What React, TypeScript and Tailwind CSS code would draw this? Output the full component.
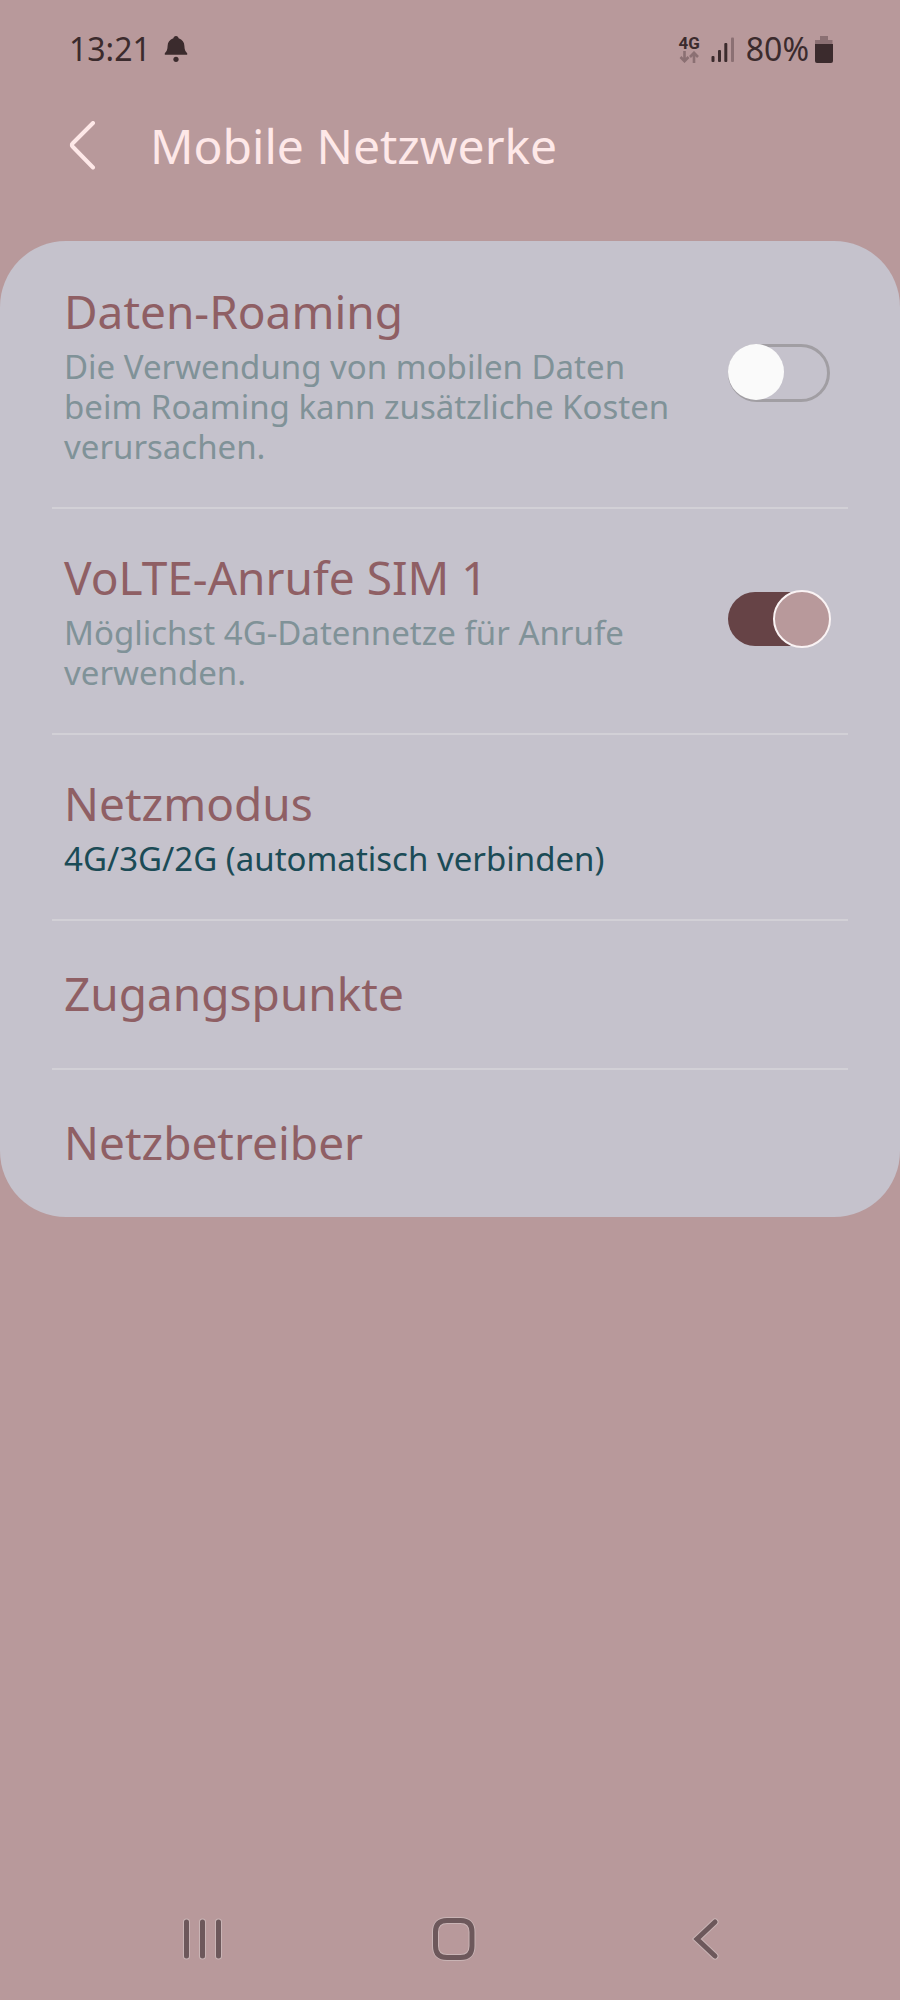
import { useState } from "react";
import type { ReactNode } from "react";

function StatusBar() {
  return (
    <div className="flex h-[98px] items-center justify-between pr-[67px] pl-[69px] text-[#3b2b2d]">
      <div className="flex items-center gap-[13px]">
        <span className="text-[32px] leading-10">13:21</span>
        <svg className="h-[26px] w-[24px]" viewBox="0 0 24 26" fill="currentColor" aria-hidden="true">
          <path d="M12 0c1.500 0 2.500 1 2.600 2.300C18.400 3.400 20.300 6.300 20.400 10c.1 3.300.8 5.300 2.800 7.300v1.500H.8v-1.500c2-2 2.700-4 2.800-7.300.1-3.700 2-6.600 5.800-7.700C9.500 1 10.500 0 12 0Z" />
          <circle cx="12" cy="23.300" r="2.600" />
        </svg>
      </div>
      <div className="flex items-center">
        <div className="flex flex-col items-center">
          <span className="font-['Roboto',sans-serif] text-[17px] leading-4 font-bold">4G</span>
          <svg className="h-3 w-5" viewBox="0 0 20 12" fill="none" stroke="#8b7073" strokeWidth="2.600" aria-hidden="true">
            <path d="M5.500 0v10M1.500 6l4 4.200 4-4.200M15 12V2M11 6l4-4.200L19 6" />
          </svg>
        </div>
        <svg className="ml-[11px] h-[25px] w-[24px]" viewBox="0 0 24 25" fill="currentColor" aria-hidden="true">
          <rect x="0.500" y="19" width="3" height="6" rx="1" />
          <rect x="7" y="13" width="3" height="12" rx="1" />
          <rect x="13.300" y="6" width="3" height="19" rx="1" />
          <rect x="20" y="0.500" width="3" height="24.500" rx="1" fill="#8b7073" />
        </svg>
        <span className="ml-[11px] text-[32px] leading-10">80%</span>
        <svg className="ml-[6px] h-[27px] w-[18px]" viewBox="0 0 18 27" fill="currentColor" aria-hidden="true">
          <path d="M5 0h8v4h4.500v4H0V4h5z" fill="#8b7073" />
          <path d="M0 8h18v17a2 2 0 0 1-2 2H2a2 2 0 0 1-2-2z" />
        </svg>
      </div>
    </div>
  );
}

function Header() {
  return (
    <header className="flex items-center px-[68px] pt-4 pb-[63px] text-[#fee8e8]">
      <button type="button" aria-label="Zurück" className="mr-[54px]">
        <svg className="h-[50px] w-7" viewBox="0 0 28 50" fill="none" stroke="currentColor" strokeWidth="4" strokeLinecap="round" strokeLinejoin="round" aria-hidden="true">
          <path d="M25 2 4.500 22.500a2 2 0 0 0 0 3L25 46.500" />
        </svg>
      </button>
      <h1 className="text-[48px] leading-16">Mobile Netzwerke</h1>
    </header>
  );
}

interface SwitchRowProps {
  id: string;
  title: string;
  description: string;
  defaultOn?: boolean;
}

function SwitchRow({ id, title, description, defaultOn = false }: SwitchRowProps) {
  const [on, setOn] = useState(defaultOn);

  return (
    <Row>
      <div className="flex items-center justify-between gap-8 py-10">
        <label htmlFor={id} className="min-w-0 flex-1">
          <Title>{title}</Title>
          <span className="mt-2 block text-[33px] leading-10 text-[#809298]">{description}</span>
        </label>
        <div className="mr-[5px] mb-1 flex h-[58px] w-[103px] items-center">
          <input
            id={id}
            type="checkbox"
            role="switch"
            checked={on}
            onChange={(e) => setOn(e.target.checked)}
            className="relative h-[58px] w-[102px] appearance-none rounded-full border-3 border-[#a19ea3] before:absolute before:-top-[3px] before:-left-[3px] before:size-14 before:rounded-full before:bg-[#fafafa] checked:h-[54px] checked:border-0 checked:bg-[#664346] checked:before:-top-[2px] checked:before:left-[45px] checked:before:size-[58px] checked:before:border-2 checked:before:border-[#faf3f4] checked:before:bg-[#b8999b]"
          />
        </div>
      </div>
    </Row>
  );
}

function Row({ children }: { children: ReactNode }) {
  return (
    <li className="border-b-2 border-[#d2d0d6] px-[12px] last:border-b-0">{children}</li>
  );
}

function Title({ children }: { children: ReactNode }) {
  return <span className="block text-[46px] leading-14 text-[#8f5f64]">{children}</span>;
}

interface LinkRowProps {
  title: string;
  value?: string;
}

function LinkRow({ title, value }: LinkRowProps) {
  return (
    <Row>
      <button
        type="button"
        className={value ? "block w-full py-10 text-left" : "block w-full pt-11 pb-[47px] text-left"}
      >
        <Title>{title}</Title>
        {value && <span className="mt-2 block text-[33px] leading-10 text-[#1b4b56]">{value}</span>}
      </button>
    </Row>
  );
}

const navIcons = [
  { label: "Letzte Apps", path: "M5.500 5v34M21.500 5v34M37.500 5v34" },
  {
    label: "Startseite",
    path: "M15 3.500h13.500c7.500 0 11.500 4 11.500 11.500v14c0 7.500-4 11.500-11.500 11.500H15C7.500 40.500 3.500 36.500 3.500 29V15C3.500 7.500 7.500 3.500 15 3.500Z",
  },
  { label: "Zurück", path: "M32 5 14 22l18 17" },
];

function NavBar() {
  return (
    <nav className="mt-auto grid h-[122px] grid-cols-3 pr-[69px] pl-[77px]">
      {navIcons.map(({ label, path }) => (
        <button key={label} type="button" aria-label={label} className="flex items-center justify-center">
          <svg className="size-11" viewBox="0 0 44 44" fill="none" strokeLinecap="round" aria-hidden="true">
            <path d={path} stroke="#c9b4b5" strokeWidth="7" />
            <path d={path} stroke="#6d585b" strokeWidth="5" />
          </svg>
        </button>
      ))}
    </nav>
  );
}

export default function App() {
  return (
    <div className="flex min-h-screen flex-col bg-[#b8999b] font-['Noto_Sans',sans-serif]">
      <StatusBar />
      <Header />
      <main>
        <ul className="rounded-[66px] bg-[#c5c2cc] px-[52px] pt-[2px]">
          <SwitchRow
            id="roaming"
            title="Daten-Roaming"
            description="Die Verwendung von mobilen Daten beim Roaming kann zusätzliche Kosten verursachen."
          />
          <SwitchRow
            id="volte"
            title="VoLTE-Anrufe SIM 1"
            description="Möglichst 4G-Datennetze für Anrufe verwenden."
            defaultOn
          />
          <LinkRow title="Netzmodus" value="4G/3G/2G (automatisch verbinden)" />
          <LinkRow title="Zugangspunkte" />
          <LinkRow title="Netzbetreiber" />
        </ul>
      </main>
      <NavBar />
    </div>
  );
}
